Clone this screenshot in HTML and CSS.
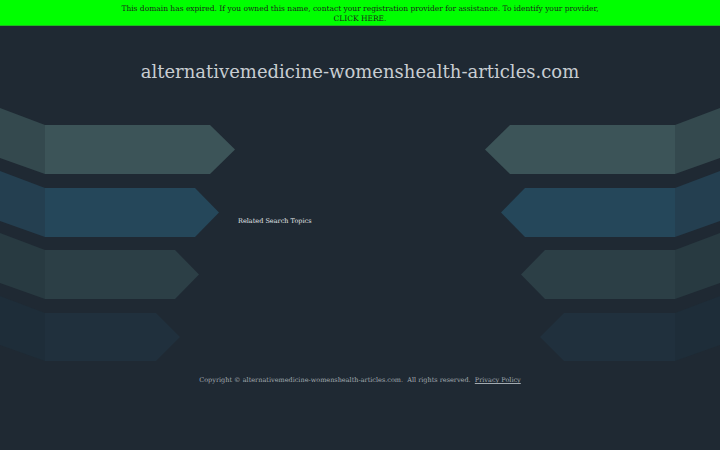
FILE: index.html
```html
<!DOCTYPE html>
<html>
<head>
<meta charset="utf-8">
<link rel="stylesheet" href="styles.css">
</head>
<body>
<div class="banner">This domain has expired. If you owned this name, contact your registration provider for assistance. To identify your provider,<br><a class="banner-link" href="#">CLICK HERE.</a></div>
<h1 class="title">alternativemedicine-womenshealth-articles.com</h1>
<div class="stage">
  <svg class="deco" width="235" height="270" viewBox="0 0 235 270">
    <polygon fill="#34494e" points="0,8 45,25 45,74 0,58"/>
    <polygon fill="#3c5458" points="45,25 210,25 235,49.5 210,74 45,74"/>
    <polygon fill="#243f50" points="0,71 45,88 45,137 0,121"/>
    <polygon fill="#25475a" points="45,88 195,88 219,112.5 195,137 45,137"/>
    <polygon fill="#283a41" points="0,133 45,150 45,199 0,183"/>
    <polygon fill="#2c3f46" points="45,150 175,150 199,174.5 175,199 45,199"/>
    <polygon fill="#1e2d39" points="0,196 45,213 45,261 0,245"/>
    <polygon fill="#20303d" points="45,213 156,213 180,237 156,261 45,261"/>
  </svg>
  <div class="center"><span class="topics">Related Search Topics</span></div>
  <svg class="deco deco-right" width="235" height="270" viewBox="0 0 235 270">
    <polygon fill="#34494e" points="0,8 45,25 45,74 0,58"/>
    <polygon fill="#3c5458" points="45,25 210,25 235,49.5 210,74 45,74"/>
    <polygon fill="#243f50" points="0,71 45,88 45,137 0,121"/>
    <polygon fill="#25475a" points="45,88 195,88 219,112.5 195,137 45,137"/>
    <polygon fill="#283a41" points="0,133 45,150 45,199 0,183"/>
    <polygon fill="#2c3f46" points="45,150 175,150 199,174.5 175,199 45,199"/>
    <polygon fill="#1e2d39" points="0,196 45,213 45,261 0,245"/>
    <polygon fill="#20303d" points="45,213 156,213 180,237 156,261 45,261"/>
  </svg>
</div>
<div class="footer">Copyright © alternativemedicine-womenshealth-articles.com.&nbsp; All rights reserved.&nbsp; <a class="footer-link" href="#">Privacy Policy</a></div>
</body>
</html>
```
FILE: styles.css
```css
html, body {
  margin: 0;
  padding: 0;
}
body {
  background: #1f2933;
  font-family: "DejaVu Serif", serif;
  width: 720px;
  height: 450px;
  overflow: hidden;
}
.banner {
  background: #00ff00;
  color: #1a2a1a;
  text-align: center;
  font-size: 7.5px;
  line-height: 9.5px;
  height: 26px;
  padding-top: 4px;
  box-sizing: border-box;
  border-bottom: 1px solid #1fb81f;
}
.banner-link {
  color: #1a2a1a;
  text-decoration: none;
}
.title {
  margin: 0;
  padding-top: 34px;
  height: 74px;
  box-sizing: border-box;
  text-align: center;
  font-weight: normal;
  font-size: 18px;
  line-height: 24px;
  color: #c8cdd2;
}
.stage {
  display: flex;
  justify-content: space-between;
  height: 270px;
}
.deco {
  display: block;
  flex: none;
}
.deco-right {
  transform: scaleX(-1);
}
.center {
  flex: 1;
  padding-top: 108px;
  padding-left: 3px;
}
.topics {
  font-size: 6.5px;
  line-height: 12px;
  color: #e2e6e8;
}
.footer {
  text-align: center;
  font-size: 6.5px;
  line-height: 12px;
  padding-top: 4px;
  color: #a3abb1;
}
.footer-link {
  color: #a3abb1;
}
```
